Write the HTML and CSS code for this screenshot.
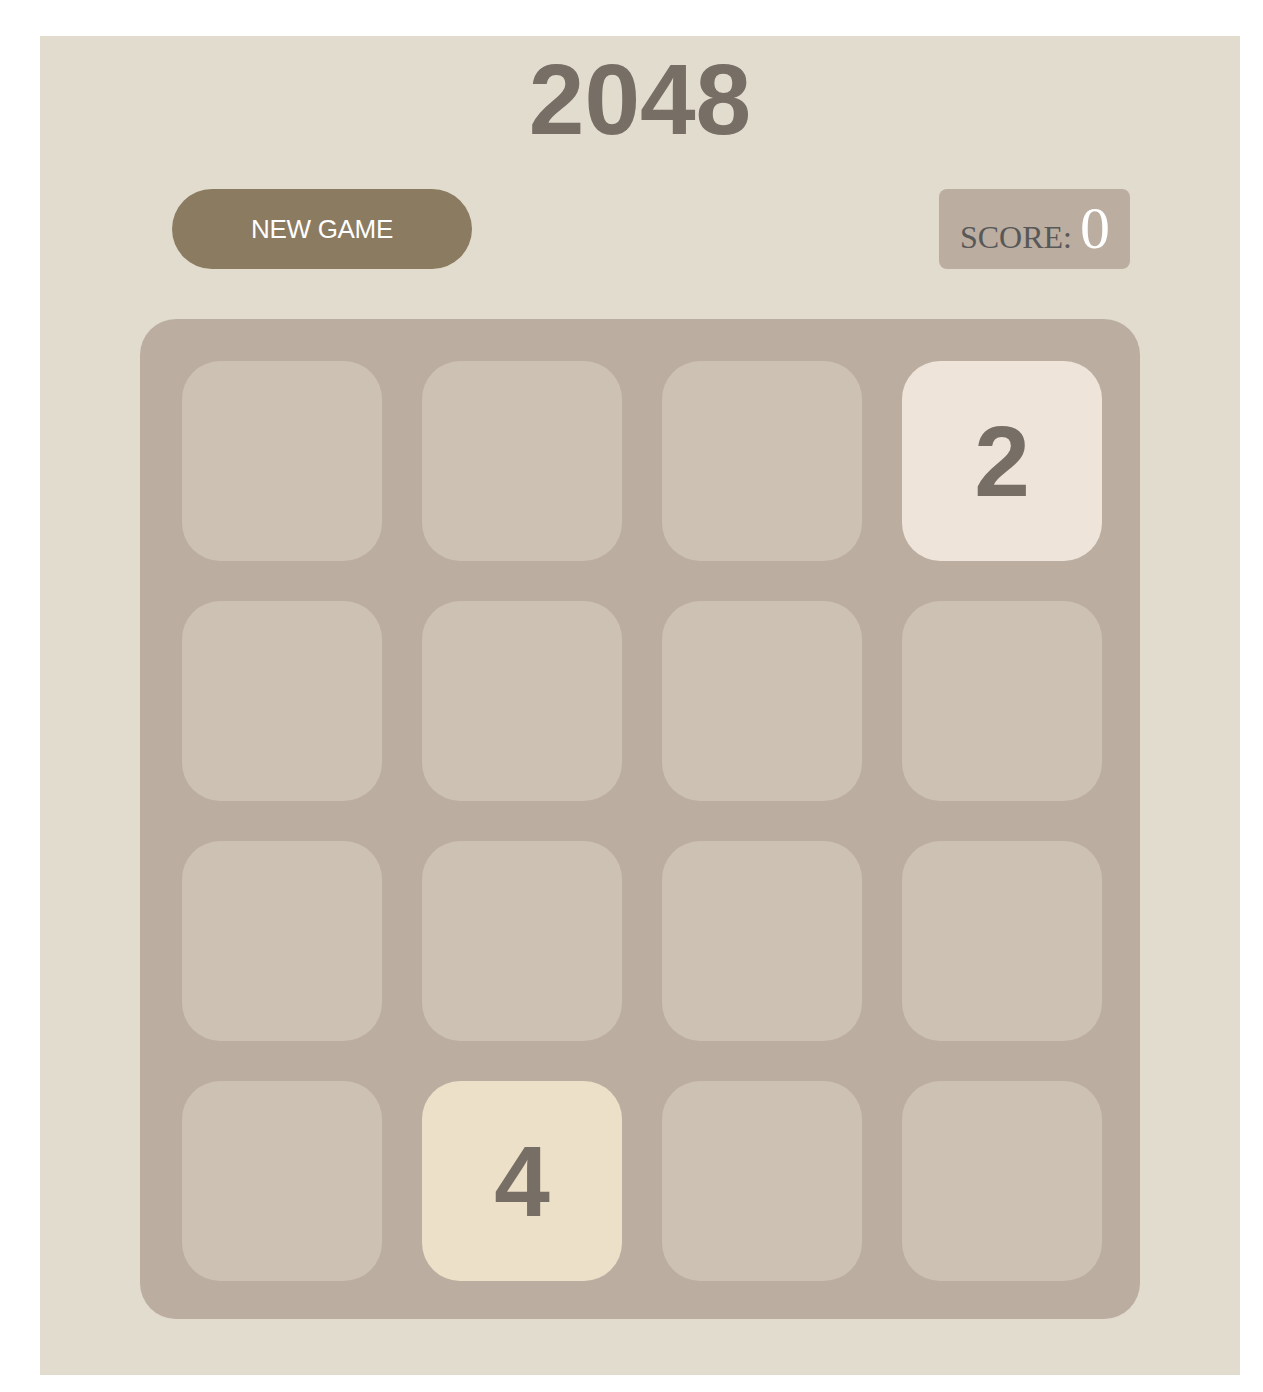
FILE: index.html
```html
<!DOCTYPE html>
<html lang="en">
<head>
<meta charset="utf-8">
<title>2048</title>
<link rel="stylesheet" href="styles.css">
</head>
<body>
<div class="page">
  <div class="game">
    <h1 class="title">2048</h1>
    <div class="controls">
      <button class="new-game">NEW GAME</button>
      <div class="score"><span class="score-label">SCORE:</span><span class="score-value">0</span></div>
    </div>
    <div class="board">
      <div class="tile"></div>
      <div class="tile"></div>
      <div class="tile"></div>
      <div class="tile tile-2">2</div>
      <div class="tile"></div>
      <div class="tile"></div>
      <div class="tile"></div>
      <div class="tile"></div>
      <div class="tile"></div>
      <div class="tile"></div>
      <div class="tile"></div>
      <div class="tile"></div>
      <div class="tile"></div>
      <div class="tile tile-4">4</div>
      <div class="tile"></div>
      <div class="tile"></div>
    </div>
  </div>
</div>
</body>
</html>
```

FILE: styles.css
```css
html, body {
  margin: 0;
  padding: 0;
  background: #ffffff;
}

.page {
  padding: 36px 0 0 40px;
}

.game {
  width: 1200px;
  box-sizing: border-box;
  background: #e2dccf;
  padding: 6px 0 56px;
  font-family: "Liberation Sans", Arial, sans-serif;
}

.title {
  margin: 0;
  height: 119px;
  text-align: center;
  font-size: 100px;
  font-weight: bold;
  line-height: normal;
  color: #776e65;
}

.controls {
  margin-top: 28px;
  height: 80px;
  display: flex;
  justify-content: space-between;
  padding: 0 110px 0 132px;
}

.new-game {
  width: 300px;
  height: 80px;
  border: none;
  border-radius: 40px;
  background: #8b7b61;
  color: #ffffff;
  font-family: "Liberation Sans", Arial, sans-serif;
  font-size: 26px;
  letter-spacing: -0.3px;
  padding: 0;
  cursor: pointer;
}

.score {
  height: 80px;
  box-sizing: border-box;
  background: #bbada0;
  border-radius: 8px;
  padding: 9px 20px 0 21px;
  display: flex;
  align-items: baseline;
  gap: 8px;
  font-family: "Liberation Serif", "Times New Roman", serif;
}

.score-label {
  font-size: 32px;
  line-height: 1;
  color: #585858;
}

.score-value {
  font-size: 60px;
  line-height: 1;
  color: #ffffff;
}

.board {
  width: 1000px;
  height: 1000px;
  box-sizing: border-box;
  margin: 50px auto 0;
  background: #bbada0;
  border-radius: 36px;
  padding: 42px 38px 38px 42px;
  display: grid;
  grid-template-columns: repeat(4, 200px);
  grid-template-rows: repeat(4, 200px);
  gap: 40px;
}

.tile {
  border-radius: 38px;
  background: #cdc1b4;
  display: flex;
  align-items: center;
  justify-content: center;
  font-size: 100px;
  font-weight: bold;
  color: #776e65;
}

.tile-2 {
  background: #eee4da;
}

.tile-4 {
  background: #ede0c8;
}
```
